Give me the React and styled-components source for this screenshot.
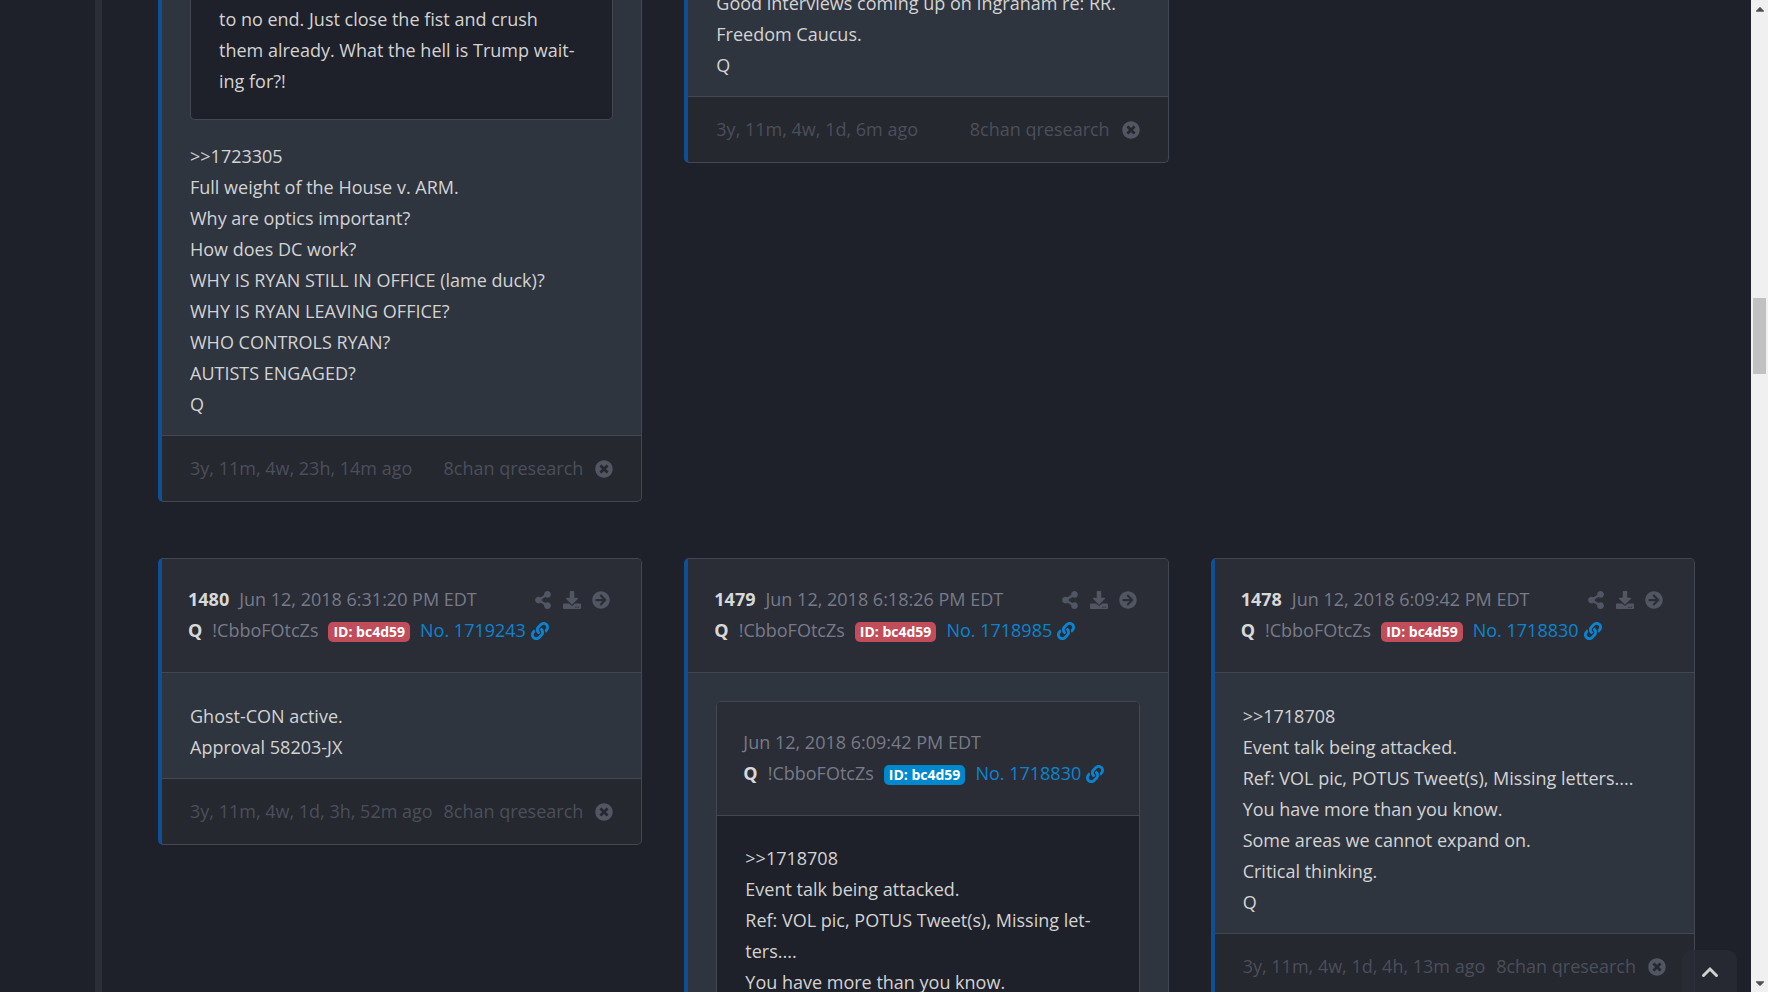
import React from 'react'
import styled, { createGlobalStyle } from 'styled-components'
import {
    FaArrowCircleRight,
    FaCaretDown,
    FaCaretUp,
    FaDownload,
    FaLink,
    FaShareAlt,
    FaTimesCircle,
} from 'react-icons/fa'

const olderPosts = [
    {
        quote: { lines: ['to no end. Just close the fist and crush them already. What the hell is Trump wait\u00ading for?!'] },
        lines: [
            '>>1723305',
            'Full weight of the House v. ARM.',
            'Why are optics important?',
            'How does DC work?',
            'WHY IS RYAN STILL IN OFFICE (lame duck)?',
            'WHY IS RYAN LEAVING OFFICE?',
            'WHO CONTROLS RYAN?',
            'AUTISTS ENGAGED?',
            'Q',
        ],
        age: '3y, 11m, 4w, 23h, 14m ago',
    },
    {
        lines: ['Good interviews coming up on Ingraham re: RR.', 'Freedom Caucus.', 'Q'],
        age: '3y, 11m, 4w, 1d, 6m ago',
    },
]

const talkLines = [
    '>>1718708',
    'Event talk being attacked.',
    'Ref: VOL pic, POTUS Tweet(s), Missing let\u00adters....',
    'You have more than you know.',
    'Some areas we cannot expand on.',
    'Critical thinking.',
    'Q',
]

const posts = [
    {
        head: { number: '1480', date: 'Jun 12, 2018 6:31:20 PM EDT', link: '1719243' },
        lines: ['Ghost-CON active.', 'Approval 58203-JX'],
        age: '3y, 11m, 4w, 1d, 3h, 52m ago',
    },
    {
        head: { number: '1479', date: 'Jun 12, 2018 6:18:26 PM EDT', link: '1718985' },
        quote: {
            head: { date: 'Jun 12, 2018 6:09:42 PM EDT', link: '1718830' },
            lines: talkLines,
        },
        lines: [],
    },
    {
        head: { number: '1478', date: 'Jun 12, 2018 6:09:42 PM EDT', link: '1718830' },
        lines: talkLines,
        age: '3y, 11m, 4w, 1d, 4h, 13m ago',
    },
]

function PostHeader({ head, quoted }) {
    return (
        <Header>
            <HeaderLine>
                {head.number && <strong>{head.number}</strong>}
                <time>{head.date}</time>
                {!quoted && (
                    <Tools>
                        <IconButton aria-label="Share"><FaShareAlt /></IconButton>
                        <IconButton aria-label="Download"><FaDownload /></IconButton>
                        <IconButton aria-label="Open"><FaArrowCircleRight /></IconButton>
                    </Tools>
                )}
            </HeaderLine>
            <HeaderLine>
                <strong>Q</strong>
                <span>!CbboFOtcZs</span>
                <Badge $quoted={quoted}>ID: bc4d59</Badge>
                <PostLink href="#">No. {head.link}<FaLink /></PostLink>
            </HeaderLine>
        </Header>
    )
}

function Lines({ lines }) {
    return lines.map((line, index) => <p key={index}>{line}</p>)
}

function Post({ post }) {
    const { head, quote, lines, age } = post
    return (
        <Card $cut={!head}>
            {head && <PostHeader head={head} />}
            <Body $cut={!head}>
                {quote && (
                    <Quote $cut={!quote.head}>
                        {quote.head && <PostHeader head={quote.head} quoted />}
                        <QuoteBody $cut={!quote.head}>
                            <Lines lines={quote.lines} />
                        </QuoteBody>
                    </Quote>
                )}
                <Lines lines={lines} />
            </Body>
            {age && (
                <Footer>
                    <span>{age}</span>
                    <Source>8chan qresearch <IconButton aria-label="Close"><FaTimesCircle /></IconButton></Source>
                </Footer>
            )}
        </Card>
    )
}

function App() {
    return (
        <Page>
            <GlobalStyle />
            <Sidebar />
            <Feed>
                <Row>
                    {olderPosts.map((post, index) => <Post key={index} post={post} />)}
                </Row>
                <Row>
                    {posts.map((post) => <Post key={post.head.number} post={post} />)}
                </Row>
            </Feed>
            <ScrollTrack>
                <FaCaretUp />
                <ScrollThumb />
                <FaCaretDown />
            </ScrollTrack>
            <TopButton aria-label="Back to top">
                <svg width="18" height="12" viewBox="0 0 18 12" fill="none" stroke="currentColor" strokeWidth="3">
                    <path d="M2.5 9.5L9 3L15.5 9.5" strokeLinecap="round" />
                </svg>
            </TopButton>
        </Page>
    )
}

export default App

const GlobalStyle = createGlobalStyle`
    *{
        box-sizing:border-box;
    }
    body{
        margin:0;
        overflow:hidden;
        background:#1e2129;
        color:#d3d3d3;
        font-family:"Open Sans", "Noto Sans", sans-serif;
        font-size:18px;
        line-height:31px;
    }
    p{
        margin:0;
    }
`

const Page = styled.div`
    display:grid;
    grid-template-columns:102px minmax(0, 1fr) 17px;
    height:100vh;
    overflow:hidden;
`

const Sidebar = styled.aside`
    border-right:7px solid #2b2e37;
`

const Feed = styled.main`
    display:flex;
    flex-direction:column;
    gap:56px;
    min-height:0;
    margin-top:-12px;
    padding:0 56px;
`

const Row = styled.section`
    display:grid;
    grid-template-columns:repeat(3, minmax(0, 1fr));
    column-gap:42px;
    align-items:start;
`

const Card = styled.article`
    border:1px solid #434752;
    border-left:4px solid #0f4f96;
    border-top-width:${props => props.$cut ? '0' : '1px'};
    border-radius:${props => props.$cut ? '0 0 5px 5px' : '5px'};
    background:#25282f;
    overflow:hidden;
`

const Header = styled.header`
    padding:25px 31px 26px 26px;
    border-bottom:1px solid #434752;
    background:#2a2d35;
    color:#777b89;
    strong{
        color:#d8d8d8;
    }
`

const HeaderLine = styled.div`
    display:flex;
    align-items:baseline;
    gap:10px;
    white-space:nowrap;
`

const Tools = styled.div`
    display:flex;
    align-self:center;
    gap:11px;
    margin-left:auto;
`

const IconButton = styled.button`
    display:flex;
    padding:0;
    border:0;
    background:none;
    color:#525662;
    font-size:18px;
    cursor:pointer;
`

const Badge = styled.span`
    padding:0 5px;
    border-radius:5px;
    background:${props => props.$quoted ? '#0088ce' : '#c04d59'};
    color:white;
    font-size:14px;
    font-weight:700;
    line-height:20px;
`

const PostLink = styled.a`
    display:flex;
    align-items:center;
    gap:5px;
    color:#0a84d0;
    text-decoration:none;
`

const Body = styled.div`
    padding:${props => props.$cut ? '0 28px 15px' : '28px 28px 15px'};
    background:#2f353f;
`

const Quote = styled.blockquote`
    margin:0 0 21px;
    border:1px solid #434752;
    border-top-width:${props => props.$cut ? '0' : '1px'};
    border-radius:${props => props.$cut ? '0 0 5px 5px' : '5px'};
    background:#1e2129;
    overflow:hidden;
`

const QuoteBody = styled.div`
    padding:${props => props.$cut ? '16px 28px 22px' : '27px 28px 22px'};
`

const Footer = styled.footer`
    display:flex;
    justify-content:space-between;
    padding:17px 28px;
    border-top:1px solid #434752;
    color:#4b4f5b;
    white-space:nowrap;
`

const Source = styled.div`
    display:flex;
    align-items:center;
    gap:12px;
`

const ScrollTrack = styled.div`
    display:flex;
    flex-direction:column;
    align-items:center;
    padding:2px 0;
    background:#f0f0f0;
    color:#505050;
    font-size:14px;
    svg:last-child{
        margin-top:auto;
    }
`

const ScrollThumb = styled.div`
    width:13px;
    height:76px;
    margin-top:282px;
    background:#c1c1c1;
`

const TopButton = styled.button`
    position:fixed;
    right:31px;
    bottom:0;
    display:flex;
    justify-content:center;
    width:55px;
    height:42px;
    padding:16px 0 0;
    border:0;
    border-radius:10px 10px 0 0;
    background:rgba(41,44,52,.8);
    color:#d0d0d0;
    cursor:pointer;
`
